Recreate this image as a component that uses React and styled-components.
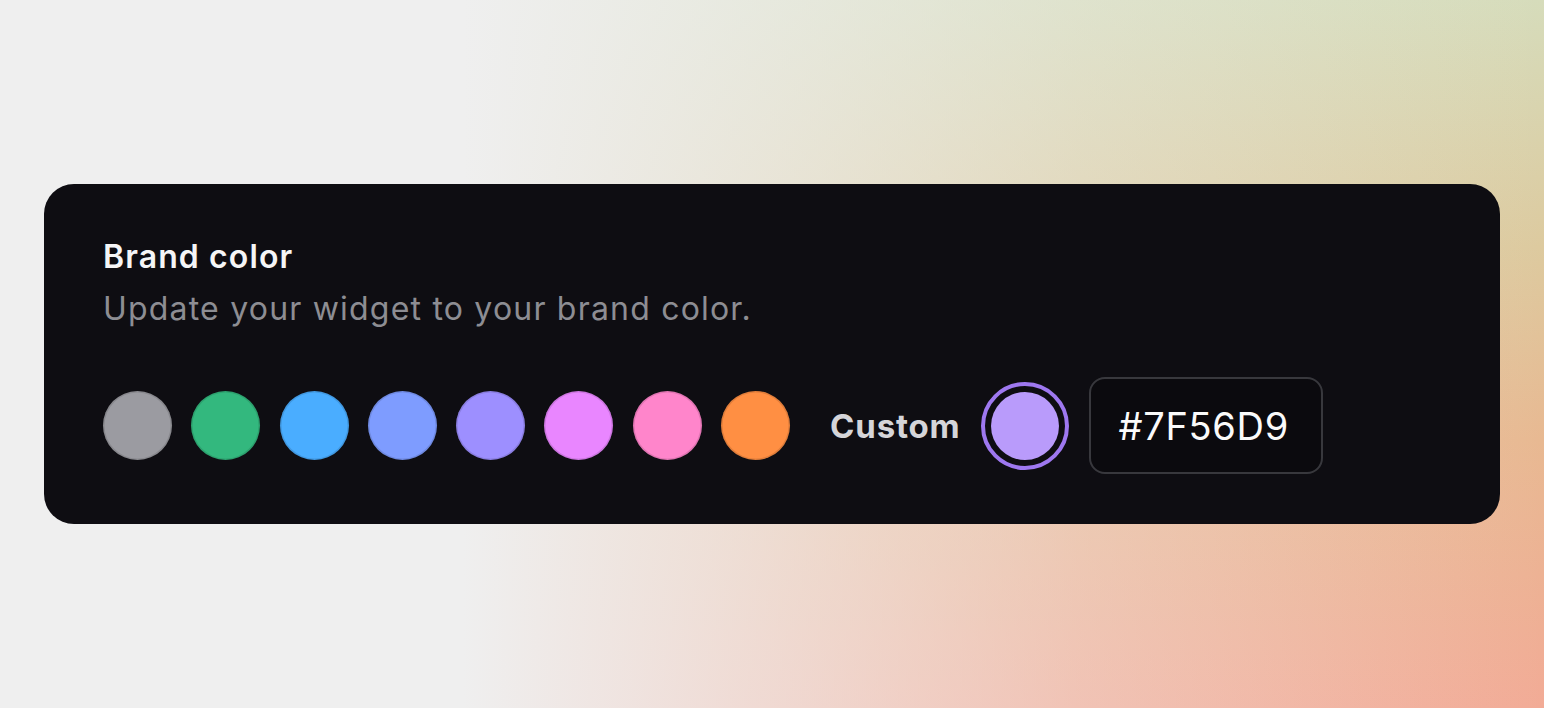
import React, { useState } from "react";
import styled, { createGlobalStyle } from "styled-components";

const GlobalStyle = createGlobalStyle`
  html, body {
    margin: 0;
    padding: 0;
  }
  body {
    font-family: Inter, "Noto Sans", sans-serif;
    -webkit-font-smoothing: antialiased;
  }
`;

const presets = [
  "#9b9ba1",
  "#33b87e",
  "#4aadff",
  "#7e9cff",
  "#9d8fff",
  "#e986ff",
  "#ff85cb",
  "#ff8f43",
];

const App = () => {
  const [hex, setHex] = useState("#7F56D9");

  return (
    <Page>
      <GlobalStyle />
      <Card>
        <Title>Brand color</Title>
        <Subtitle>Update your widget to your brand color.</Subtitle>
        <Row>
          <Swatches>
            {presets.map((c) => (
              <Swatch key={c} color={c} aria-label={c} />
            ))}
          </Swatches>
          <CustomGroup>
            <CustomLabel>Custom</CustomLabel>
            <Ring>
              <Dot />
            </Ring>
            <HexInput value={hex} onChange={(e) => setHex(e.target.value)} />
          </CustomGroup>
        </Row>
      </Card>
    </Page>
  );
};

export default App;

const Page = styled("main")`
  box-sizing: border-box;
  min-height: 100vh;
  padding: 184px 44px;
  background:
    linear-gradient(90deg, #efefef 30%, rgba(239, 239, 239, 0.35) 70%, rgba(239, 239, 239, 0) 100%),
    linear-gradient(180deg, #d6dcbb 0%, #ddca9f 35%, #e8b992 62%, #f2ab96 100%);
`;
const Card = styled("section")`
  box-sizing: border-box;
  display: flex;
  flex-direction: column;
  height: 340px;
  padding: 55px 60px 50px 59px;
  border-radius: 30px;
  background-color: #0e0d12;
`;
const Title = styled("h2")`
  margin: 0;
  font-size: 32px;
  line-height: 36px;
  letter-spacing: 1.1px;
  font-weight: 600;
  color: #f5f5f6;
`;
const Subtitle = styled("p")`
  margin: 16px 0 0;
  font-size: 32px;
  line-height: 36px;
  letter-spacing: 1.2px;
  font-weight: 400;
  color: #8d8d93;
`;
const Row = styled("div")`
  display: flex;
  align-items: center;
  margin-top: 50px;
  height: 97px;
`;
const Swatches = styled("div")`
  display: flex;
  gap: 19.3px;
`;
const Swatch = styled("button")`
  width: 69px;
  height: 69px;
  padding: 0;
  border: none;
  border-radius: 50%;
  background-color: ${(p) => p.color};
  box-shadow: inset 0 0 0 1.5px rgba(0, 0, 0, 0.12);
  cursor: pointer;
`;
const CustomGroup = styled("div")`
  display: flex;
  align-items: center;
  margin-left: 40px;
`;
const CustomLabel = styled("span")`
  font-size: 33px;
  font-weight: 700;
  letter-spacing: 0.8px;
  color: #d5d5d9;
  margin-right: 21px;
`;
const Ring = styled("div")`
  box-sizing: border-box;
  display: flex;
  align-items: center;
  justify-content: center;
  width: 88px;
  height: 88px;
  border: 4px solid #9e78f0;
  border-radius: 50%;
  margin-right: 20px;
`;
const Dot = styled("div")`
  width: 68px;
  height: 68px;
  border-radius: 50%;
  background-color: #b99bfb;
`;
const HexInput = styled("input")`
  box-sizing: border-box;
  width: 234px;
  height: 97px;
  padding: 0 0 0 27px;
  border: 2px solid #38383d;
  border-radius: 16px;
  background-color: #0b0a0e;
  color: #fafafa;
  font-family: Inter, "Noto Sans", sans-serif;
  font-size: 38px;
  letter-spacing: 0.7px;
  outline: none;
`;
